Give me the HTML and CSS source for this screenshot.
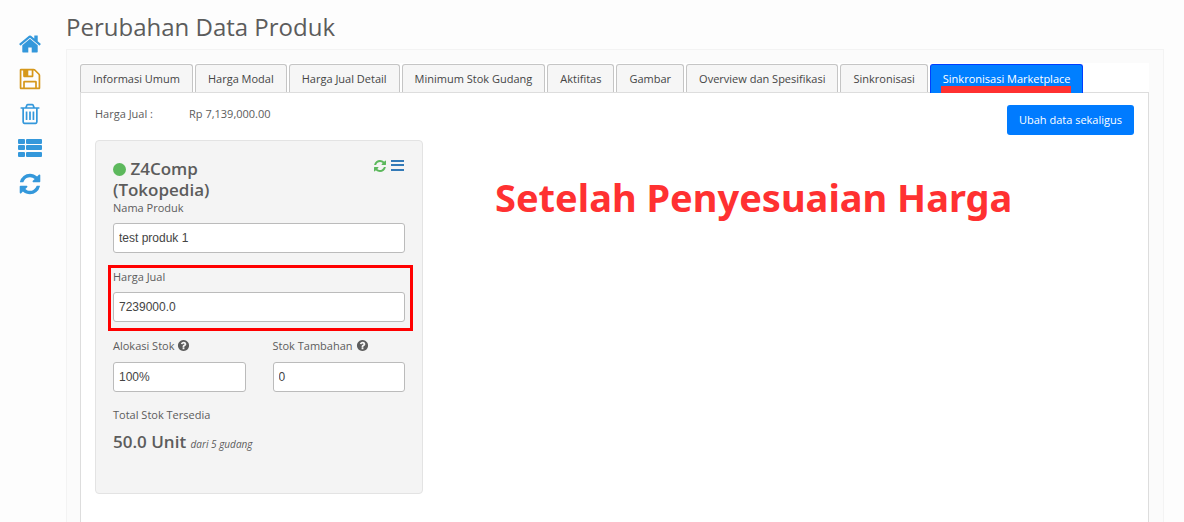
FILE: index.html
```html
<!DOCTYPE html>
<html lang="id">
<head>
<meta charset="utf-8">
<title>Perubahan Data Produk</title>
<link rel="stylesheet" href="styles.css">
</head>
<body>
<svg class="sprite" aria-hidden="true">
  <symbol id="home" viewBox="0 0 1792 1792"><path d="M1472 992v480q0 26-19 45t-45 19h-384v-384h-256v384h-384q-26 0-45-19t-19-45v-480q0-1 .5-3t.5-3l575-474 575 474q1 2 1 6zm223-69l-62 74q-8 9-21 11h-3q-13 0-21-7l-692-577-692 577q-12 8-24 7-13-2-21-11l-62-74q-8-10-7-23.5t11-21.5l719-599q32-26 76-26t76 26l244 204v-195q0-14 9-23t23-9h192q14 0 23 9t9 23v408l219 182q10 8 11 21.5t-7 23.5z"/></symbol>
  <symbol id="save" viewBox="0 0 1792 1792"><path d="M512 1536h768v-384h-768v384zm896 0h128v-896q0-14-10-38.5t-20-34.5l-281-281q-10-10-34-20t-39-10v416q0 40-28 68t-68 28h-576q-40 0-68-28t-28-68v-416h-128v1280h128v-416q0-40 28-68t68-28h832q40 0 68 28t28 68v416zm-384-928v-320q0-13-9.5-22.5t-22.5-9.5h-192q-13 0-22.5 9.5t-9.5 22.5v320q0 13 9.5 22.5t22.5 9.5h192q13 0 22.5-9.5t9.5-22.5zm640 32v928q0 40-28 68t-68 28h-1344q-40 0-68-28t-28-68v-1344q0-40 28-68t68-28h928q40 0 88 20t76 48l280 280q28 28 48 76t20 88z"/></symbol>
  <symbol id="trash" viewBox="0 0 1792 1792"><path d="M704 736v576q0 14-9 23t-23 9h-64q-14 0-23-9t-9-23v-576q0-14 9-23t23-9h64q14 0 23 9t9 23zm256 0v576q0 14-9 23t-23 9h-64q-14 0-23-9t-9-23v-576q0-14 9-23t23-9h64q14 0 23 9t9 23zm256 0v576q0 14-9 23t-23 9h-64q-14 0-23-9t-9-23v-576q0-14 9-23t23-9h64q14 0 23 9t9 23zm128 724v-948h-896v948q0 22 7 40.5t14.5 27 10.5 8.5h832q3 0 10.5-8.5t14.5-27 7-40.5zm-672-1076h448l-48-117q-7-9-17-11h-317q-10 2-17 11zm928 32v64q0 14-9 23t-23 9h-96v948q0 83-47 143.5t-113 60.5h-832q-66 0-113-58.5t-47-141.5v-952h-96q-14 0-23-9t-9-23v-64q0-14 9-23t23-9h309l70-167q15-37 54-63t79-26h320q40 0 79 26t54 63l70 167h309q14 0 23 9t9 23z"/></symbol>
  <symbol id="list" viewBox="0 0 24 24"><rect x="0" y="2" width="7" height="5" rx="1"/><rect x="8" y="2" width="16" height="5" rx="1"/><rect x="0" y="8" width="7" height="5" rx="1"/><rect x="8" y="8" width="16" height="5" rx="1"/><rect x="0" y="15" width="7" height="5" rx="1"/><rect x="8" y="15" width="16" height="5" rx="1"/></symbol>
  <symbol id="refresh" viewBox="0 0 1792 1792"><path d="M1639 1056q0 5-1 7-64 268-268 434.500t-478 166.500q-146 0-282.500-55t-243.500-157l-129 129q-19 19-45 19t-45-19-19-45v-448q0-26 19-45t45-19h448q26 0 45 19t19 45-19 45l-137 137q71 66 161 102t187 36q134 0 250-65t186-179q11-17 53-117 8-23 30-23h192q13 0 22.500 9.500t9.500 22.500zm25-800v448q0 26-19 45t-45 19h-448q-26 0-45-19t-19-45 19-45l138-138q-148-137-349-137-134 0-250 65t-186 179q-11 17-53 117-8 23-30 23h-199q-13 0-22.500-9.500t-9.500-22.500v-7q65-268 270-434.500t480-166.500q146 0 284 55.500t245 156.500l130-129q19-19 45-19t45 19 19 45z"/></symbol>
  <symbol id="bars" viewBox="0 0 14 14"><path d="M0 1h13v2H0zM0 5h13v2H0zM0 10h13v2H0z"/></symbol>
  <symbol id="help" viewBox="0 0 1792 1792"><path d="M1024 1376v-192q0-14-9-23t-23-9h-192q-14 0-23 9t-9 23v192q0 14 9 23t23 9h192q14 0 23-9t9-23zm256-672q0-88-55.500-163t-138.500-116-170-41q-243 0-371 213-15 24 8 42l132 100q7 6 19 6 16 0 25-12 53-68 86-92 34-24 86-24 48 0 85.500 26t37.500 59q0 38-20 61t-68 45q-63 28-115.500 86.500t-52.500 125.500v36q0 14 9 23t23 9h192q14 0 23-9t9-23q0-19 21.500-49.500t54.500-49.500q32-18 49-28.500t46-35 44.500-48 28-60.500 12.500-81zm384 192q0 209-103 385.500t-279.500 279.500-385.500 103-385.500-103-279.500-279.500-103-385.500 103-385.500 279.500-279.500 385.500-103 385.500 103 279.500 279.500 103 385.500z"/></symbol>
</svg>
<div class="page">
  <nav class="rail" aria-label="Aksi">
    <a class="rail-link" href="#" aria-label="Beranda"><svg class="icon"><use href="#home"/></svg></a>
    <button class="rail-link rail-save" type="button" aria-label="Simpan"><svg class="icon"><use href="#save"/></svg></button>
    <button class="rail-link" type="button" aria-label="Hapus"><svg class="icon"><use href="#trash"/></svg></button>
    <a class="rail-link" href="#" aria-label="Daftar"><svg class="icon"><use href="#list"/></svg></a>
    <button class="rail-link" type="button" aria-label="Muat ulang"><svg class="icon"><use href="#refresh"/></svg></button>
  </nav>
  <main class="main">
    <h1 class="title">Perubahan Data Produk</h1>
    <div class="frame">
      <div class="sheet">
        <div class="tabs" role="tablist">
          <button class="tab" role="tab" type="button">Informasi Umum</button>
          <button class="tab" role="tab" type="button">Harga Modal</button>
          <button class="tab" role="tab" type="button">Harga Jual Detail</button>
          <button class="tab" role="tab" type="button">Minimum Stok Gudang</button>
          <button class="tab" role="tab" type="button">Aktifitas</button>
          <button class="tab" role="tab" type="button">Gambar</button>
          <button class="tab" role="tab" type="button">Overview dan Spesifikasi</button>
          <button class="tab" role="tab" type="button">Sinkronisasi</button>
          <button class="tab tab-active" role="tab" type="button" aria-selected="true">Sinkronisasi Marketplace</button>
        </div>
        <section class="panel">
          <div class="summary">
            <div class="price"><span class="price-label">Harga Jual :</span><span>Rp 7,139,000.00</span></div>
            <button class="primary" type="button">Ubah data sekaligus</button>
          </div>
          <div class="content">
            <article class="card">
              <header class="card-head">
                <h2 class="shop"><span class="dot"></span> Z4Comp (Tokopedia)</h2>
                <div class="card-actions">
                  <button class="mini mini-sync" type="button" aria-label="Sinkronkan"><svg class="icon"><use href="#refresh"/></svg></button>
                  <button class="mini" type="button" aria-label="Menu"><svg class="icon"><use href="#bars"/></svg></button>
                </div>
              </header>
              <div class="field">
                <label class="label" for="nama">Nama Produk</label>
                <input class="input" id="nama" type="text" value="test produk 1">
              </div>
              <div class="field field-marked">
                <label class="label" for="harga">Harga Jual</label>
                <input class="input" id="harga" type="text" value="7239000.0">
              </div>
              <div class="pair">
                <div class="field">
                  <label class="label" for="alokasi">Alokasi Stok <svg class="icon help"><use href="#help"/></svg></label>
                  <input class="input" id="alokasi" type="text" value="100%">
                </div>
                <div class="field">
                  <label class="label" for="tambahan">Stok Tambahan <svg class="icon help"><use href="#help"/></svg></label>
                  <input class="input" id="tambahan" type="text" value="0">
                </div>
              </div>
              <div class="label">Total Stok Tersedia</div>
              <p class="total">50.0 Unit <em class="note">dari 5 gudang</em></p>
            </article>
            <p class="callout">Setelah Penyesuaian Harga</p>
          </div>
        </section>
      </div>
    </div>
  </main>
</div>
</body>
</html>
```
FILE: styles.css
```css
* { box-sizing: border-box; }
body {
  margin: 0;
  background: #fdfdfd;
  color: #5c5c5c;
  font: 11px/18px "Open Sans", sans-serif;
}
button, input { font: inherit; margin: 0; }
button { cursor: pointer; }
.sprite { display: none; }
.icon { display: block; fill: currentColor; }

.page { display: flex; min-height: 100vh; overflow: hidden; }
.rail {
  display: flex;
  flex-direction: column;
  align-items: center;
  gap: 11px;
  width: 60px;
  padding-top: 32px;
}
.rail-link {
  padding: 0;
  border: 0;
  background: none;
  color: #3498db;
}
.rail-link .icon { width: 24px; height: 24px; }
.rail-save { color: #d6981b; }

.main {
  flex: 1;
  min-width: 0;
  display: flex;
  flex-direction: column;
  padding: 10px 20px 0 6px;
}
.title {
  margin: 0 0 5px;
  font-size: 24px;
  line-height: 34px;
  font-weight: 500;
}
.frame {
  flex: 1;
  display: flex;
  padding: 13px 14px 0 13px;
  border: 1px solid #f3f3f3;
  border-bottom: 0;
  background: #fbfbfb;
}
.sheet { flex: 1; min-width: 0; display: flex; flex-direction: column; background: #fff; }
.tabs { display: flex; gap: 2px; padding-top: 1px; }
.tab {
  height: 28px;
  padding: 0 12px;
  border: 1px solid #c5c5c5;
  border-bottom: 0;
  border-radius: 3px 3px 0 0;
  background: #f6f6f6;
  color: #454545;
  white-space: nowrap;
}
.tab-active {
  position: relative;
  margin-bottom: -1px;
  height: 29px;
  border-color: #003eff;
  background: #007fff;
  color: #fff;
}
.tab-active::after {
  content: "";
  position: absolute;
  left: 10px;
  right: 11px;
  bottom: 0;
  height: 7px;
  background: #ff3131;
}
.panel {
  flex: 1;
  padding: 12px 14px 28px;
  border: 1px solid #ddd;
  border-bottom: 0;
}
.summary { display: flex; justify-content: space-between; height: 35px; }
.price { display: flex; }
.price-label { width: 94px; }
.primary {
  height: 30px;
  padding: 0 12px;
  border: 0;
  border-radius: 3px;
  background: #007bff;
  color: #fff;
}
.content { display: flex; align-items: flex-start; gap: 72px; }
.card {
  width: 328px;
  min-height: 354px;
  padding: 17px;
  border: 1px solid #e3e3e3;
  border-radius: 4px;
  background: #f4f4f4;
}
.card-head { display: flex; justify-content: space-between; }
.shop { width: 120px; margin: 0; font-size: 17px; line-height: 21px; font-weight: 600; }
.dot { display: inline-block; width: 13px; height: 13px; border-radius: 50%; background: #5cb85c; vertical-align: -1px; }
.card-actions { display: flex; align-items: flex-start; gap: 4px; padding-top: 1px; }
.mini { padding: 0; border: 0; background: none; color: #337ab7; }
.mini .icon { width: 14px; height: 14px; }
.mini-sync { color: #5cb85c; }
.field { margin-bottom: 16px; }
.label { display: flex; align-items: center; gap: 3px; line-height: 15px; }
.help { width: 13px; height: 13px; }
.input {
  display: block;
  width: 100%;
  height: 30px;
  margin-top: 8px;
  padding: 0 5px;
  border: 1px solid #bbb;
  border-radius: 3px;
  background: #fff;
  color: #444;
  font-family: "Liberation Sans", Arial, sans-serif;
  font-size: 12px;
}
.field-marked { position: relative; }
.field-marked::after {
  content: "";
  position: absolute;
  inset: -4px -8px -9px -5px;
  border: 3px solid #f00;
  pointer-events: none;
}
.pair { display: grid; grid-template-columns: 1fr 1fr; gap: 27px; }
.pair .field { margin-bottom: 15px; }
.pair .input { margin-top: 9px; }
.total { margin: 8px 0 0; font-size: 17px; line-height: 24px; font-weight: 600; }
.note { font-size: 10px; font-weight: 500; }
.callout {
  margin: 33px 0 0;
  color: #ff3131;
  font: 700 38px/48px "Noto Sans", sans-serif;
  white-space: nowrap;
}
```
